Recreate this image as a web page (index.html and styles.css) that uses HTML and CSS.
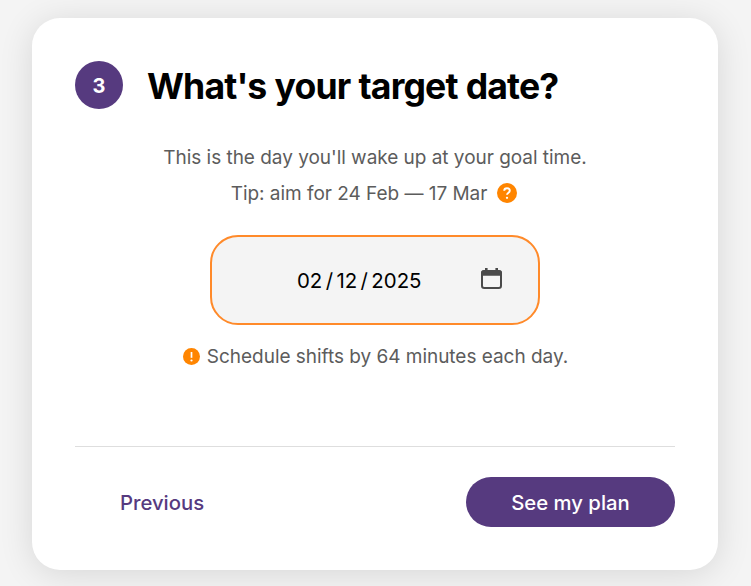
FILE: index.html
```
<!DOCTYPE html>
<html lang="en">
<head>
<meta charset="utf-8">
<title>Target date</title>
<link rel="stylesheet" href="styles.css">
</head>
<body>
<main class="card">
  <header class="head">
    <span class="step">3</span>
    <h1 class="title">What's your target date?</h1>
  </header>
  <section class="body">
    <p class="text intro">This is the day you'll wake up at your goal time.</p>
    <p class="text tip"><span>Tip: aim for 24 Feb — 17 Mar</span>
      <svg class="help" width="20" height="20" viewBox="0 0 20 20"><circle cx="10" cy="10" r="10" fill="#ff8500"/><path d="M7.2 7.8C7.2 4.4 12.8 4.5 12.8 7.7C12.8 9.7 10 9.7 10 11.8" fill="none" stroke="#fff" stroke-width="1.9"/><circle cx="10" cy="14.8" r="1.15" fill="#fff"/></svg>
    </p>
    <div class="date">
      <div class="value"><span>02</span><span class="slash">/</span><span>12</span><span class="slash">/</span><span>2025</span></div>
      <svg class="calendar" width="21" height="22" viewBox="0 0 21 22"><rect x="1" y="3.2" width="19" height="16.8" rx="2.2" fill="none" stroke="#4a4a4a" stroke-width="2"/><path d="M0 7.8V5a3 3 0 0 1 3-3h1V0h2.6v2h7.8V0H17v2h1a3 3 0 0 1 3 3v2.8z" fill="#4a4a4a"/></svg>
    </div>
    <p class="text shift"><svg class="alert" width="17" height="17" viewBox="0 0 17 17"><circle cx="8.5" cy="8.5" r="8.5" fill="#ff8500"/><path d="M8.5 4v5.8" stroke="#fff" stroke-width="1.7"/><circle cx="8.5" cy="12.5" r="1.1" fill="#fff"/></svg><span>Schedule shifts by 64 minutes each day.</span></p>
  </section>
  <footer class="foot">
    <button class="prev">Previous</button>
    <button class="next">See my plan</button>
  </footer>
</main>
</body>
</html>
```
FILE: styles.css
```
* { box-sizing: border-box; }
body { margin: 0; height: 586px; overflow: hidden; padding: 18px 33px 0 32px; background: #f4f4f4; font-family: Inter, "Liberation Sans", sans-serif; color: #000; }
.card { height: 552px; padding: 43px; border-radius: 28px; background: #fff; box-shadow: 0 4px 34px rgba(0,0,0,.12); }
.head { display: flex; align-items: center; gap: 24px; height: 48px; }
.step { width: 48px; height: 48px; border-radius: 50%; background: #563a7f; color: #fff; font-size: 20px; font-weight: 700; line-height: 50px; text-align: center; }
.title { margin: 0; font-size: 35.6px; line-height: 48px; padding-top: 4px; font-weight: 700; letter-spacing: -.84px; word-spacing: .5px; white-space: nowrap; }
.body { display: flex; flex-direction: column; align-items: center; height: 338px; padding-top: 31px; border-bottom: 1px solid #dedede; }
.text { display: flex; align-items: center; margin: 0; height: 36px; font-size: 19px; line-height: 36px; letter-spacing: -.03px; color: #5c5c5c; white-space: nowrap; }
.tip { gap: 10px; padding-right: 2px; }
.help { margin-bottom: 2px; }
.date { display: flex; align-items: center; width: 330px; height: 90px; margin: 23px 0 14px; padding: 0 36px 0 85px; border: 2px solid #ff8a2a; border-radius: 28px; background: #f4f4f4; }
.value { display: flex; width: 184px; padding-top: 2px; font-size: 20.4px; line-height: 30px; }
.slash { margin: 0 3.4px; }
.calendar { flex: none; margin-bottom: 2px; }
.shift { gap: 7px; padding-left: 1px; }
.alert { margin-bottom: 1px; }
.foot { display: flex; justify-content: space-between; padding-top: 30px; }
button { height: 50px; padding: 2px 0 0; border: 0; font: 500 20.3px/48px Inter, sans-serif; }
.prev { width: 174px; background: none; color: #563a7f; }
.next { width: 209px; border-radius: 25px; background: #563a7f; color: #fff; }
```
